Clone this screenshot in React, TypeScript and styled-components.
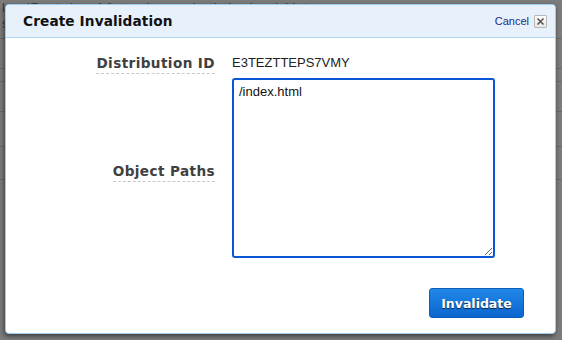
import React from 'react'
import styled, { createGlobalStyle } from 'styled-components'

const GlobalStyle = createGlobalStyle`
  html, body {
    margin: 0;
    padding: 0;
    background: #7a7a7a;
  }
  #root {
    width: 562px;
    height: 340px;
    overflow: hidden;
  }
`

const Screen = styled.div`
  position: relative;
  width: 562px;
  height: 340px;
  background: #7c7c7c;
  overflow: hidden;
`

const Backdrop = styled.div`
  display: flex;
  flex-direction: column;
  font-family: 'Liberation Sans', Arial, sans-serif;
  font-size: 13px;
  color: #3e3e3e;
`

const BackdropLine = styled.div<{ $h: number }>`
  height: ${(p) => p.$h}px;
  border-bottom: 1px solid #6a6a6a;
  padding-left: 2px;
  line-height: 16px;
  white-space: nowrap;
`

const Modal = styled.div`
  position: absolute;
  left: 5px;
  top: 4px;
  width: 549px;
  height: 328px;
  display: flex;
  flex-direction: column;
  background: #fff;
  border: 1px solid #9fcbee;
  border-radius: 4px;
  box-shadow: -1px 2px 5px rgba(0, 0, 0, 0.55);
  overflow: hidden;
`

const Header = styled.div`
  height: 32px;
  display: flex;
  align-items: center;
  justify-content: space-between;
  padding: 0 8px 0 17px;
  background: #e7f1fc;
  border-bottom: 1px solid #b3d6f3;
`

const Title = styled.h1`
  margin: 0;
  font-family: 'DejaVu Sans', Verdana, sans-serif;
  font-weight: bold;
  font-size: 13.7px;
  color: #111;
  letter-spacing: 0.1px;
`

const HeaderActions = styled.div`
  display: flex;
  align-items: center;
  gap: 5px;
`

const CancelLink = styled.a`
  font-family: 'Liberation Sans', Arial, sans-serif;
  font-size: 11px;
  color: #1e2a86;
  text-decoration: none;
  cursor: pointer;
`

const CloseBox = styled.span`
  width: 11px;
  height: 11px;
  display: flex;
  align-items: center;
  justify-content: center;
  border: 1px solid #b8b8b8;
  border-radius: 1px;
  background: linear-gradient(#fdfdfd, #e6e6e6);
`

const Body = styled.div`
  flex: 1;
  display: flex;
  flex-direction: column;
  padding: 13px 0 0 0;
`

const Form = styled.div`
  display: grid;
  grid-template-columns: 209px 263px;
  column-gap: 17px;
  row-gap: 4px;
  align-items: center;
`

const Label = styled.span<{ $drop?: number }>`
  justify-self: end;
  margin-top: ${(p) => p.$drop ?? 4}px;
  font-family: 'DejaVu Sans', Verdana, sans-serif;
  font-weight: bold;
  font-size: 13.6px;
  color: #404040;
  letter-spacing: 0.4px;
  padding-bottom: 2px;
  border-bottom: 1px dashed #c8c8c8;
`

const Value = styled.span`
  font-family: 'Liberation Sans', Arial, sans-serif;
  font-size: 13px;
  color: #222;
  line-height: 16px;
`

const PathsInput = styled.textarea`
  box-sizing: border-box;
  width: 263px;
  height: 180px;
  margin: 0;
  padding: 4px 5px;
  border: 2px solid #0a57d6;
  border-radius: 3px;
  outline: none;
  resize: both;
  font-family: 'Liberation Sans', Arial, sans-serif;
  font-size: 13px;
  color: #111;
`

const Footer = styled.div`
  display: flex;
  justify-content: flex-end;
  padding: 30px 31px 0 0;
`

const PrimaryButton = styled.button`
  width: 95px;
  height: 30px;
  border: 1px solid #0c5cb8;
  border-radius: 3px;
  background: linear-gradient(#2187e8, #0a66cf);
  color: #fff;
  font-family: 'DejaVu Sans', Verdana, sans-serif;
  font-weight: bold;
  font-size: 12.5px;
  text-shadow: 0 1px 1px rgba(0, 0, 0, 0.7);
  cursor: pointer;
`

export default function App() {
  return (
    <Screen>
      <GlobalStyle />
      <Backdrop>
        <BackdropLine $h={38}>lo&nbsp;&nbsp;&nbsp;&nbsp;IF&nbsp;&nbsp;&nbsp;st&nbsp;&nbsp;&nbsp;be&nbsp;&nbsp;&nbsp;A fast&nbsp;&nbsp;&nbsp;&nbsp;d&nbsp;&nbsp;&nbsp;&nbsp;&nbsp;&nbsp;&nbsp;&nbsp;&nbsp;&nbsp;&nbsp;&nbsp;i&nbsp;&nbsp;&nbsp;&nbsp;th&nbsp;&nbsp;b&nbsp;&nbsp;&nbsp;&nbsp;i&nbsp;&nbsp;&nbsp;&nbsp;&nbsp;d&nbsp;&nbsp;bi&nbsp;&nbsp;t<br />s</BackdropLine>
        <BackdropLine $h={29} />
        <BackdropLine $h={12} />
        <BackdropLine $h={29} />
        <BackdropLine $h={34} />
        <BackdropLine $h={32} />
      </Backdrop>
      <Modal>
        <Header>
          <Title>Create Invalidation</Title>
          <HeaderActions>
            <CancelLink>Cancel</CancelLink>
            <CloseBox>
              <svg width="9" height="9" viewBox="0 0 9 9">
                <path d="M1.5 1.5 L7.5 7.5 M7.5 1.5 L1.5 7.5" stroke="#555" strokeWidth="1.6" />
              </svg>
            </CloseBox>
          </HeaderActions>
        </Header>
        <Body>
          <Form>
            <Label>Distribution ID</Label>
            <Value>E3TEZTTEPS7VMY</Value>
            <Label $drop={8}>Object Paths</Label>
            <PathsInput defaultValue="/index.html" />
          </Form>
          <Footer>
            <PrimaryButton>Invalidate</PrimaryButton>
          </Footer>
        </Body>
      </Modal>
    </Screen>
  )
}
